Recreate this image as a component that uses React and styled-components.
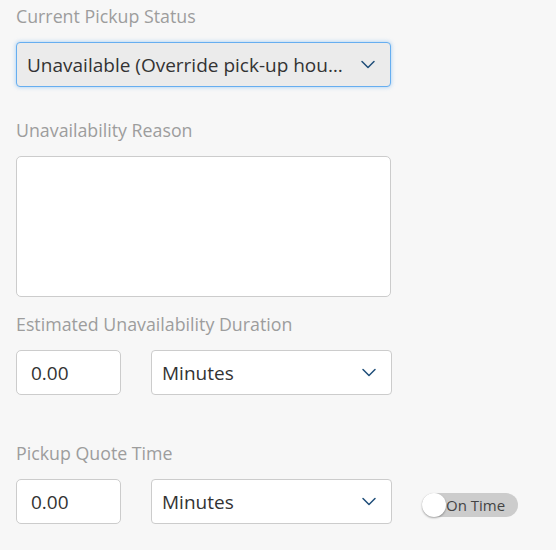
import React from 'react';
import styled, { createGlobalStyle } from 'styled-components';

const GlobalStyle = createGlobalStyle`
  html, body {
    margin: 0;
    padding: 0;
    background: #f7f7f7;
  }
  body {
    font-family: "Open Sans", "Noto Sans", sans-serif;
  }
`;

const Chevron = () => (
  <svg width="16" height="9" viewBox="0 0 16 9" fill="none">
    <path d="M2 1.5 L8 7.5 L14 1.5" stroke="#1f4e79" strokeWidth="1.5" strokeLinecap="round" strokeLinejoin="round" />
  </svg>
);

const App = () => {
  return (
    <>
      <GlobalStyle />
      <Form>
        <Label top={4}>Current Pickup Status</Label>
        <Select width={375} focused>
          <SelectText>Unavailable (Override pick-up hours)</SelectText>
          <Chevron />
        </Select>

        <Label top={31}>Unavailability Reason</Label>
        <TextArea />

        <Label top={15}>Estimated Unavailability Duration</Label>
        <Row>
          <NumberBox>0.00</NumberBox>
          <Select width={241}>
            <SelectText>Minutes</SelectText>
            <Chevron />
          </Select>
        </Row>

        <Label top={46}>Pickup Quote Time</Label>
        <Row>
          <NumberBox>0.00</NumberBox>
          <Select width={241}>
            <SelectText>Minutes</SelectText>
            <Chevron />
          </Select>
          <Toggle>
            <Knob />
            <ToggleText>On Time</ToggleText>
          </Toggle>
        </Row>
      </Form>
    </>
  );
};

export default App;

const Form = styled.div`
  display: flex;
  flex-direction: column;
  align-items: flex-start;
  padding: 0 16px 26px;
`;

const Label = styled.div`
  margin-top: ${(p) => p.top}px;
  margin-bottom: 14px;
  font-size: 17.8px;
  line-height: 24px;
  color: #9d9d9d;
`;

const Select = styled.div`
  box-sizing: border-box;
  width: ${(p) => p.width}px;
  height: 45px;
  display: flex;
  align-items: center;
  justify-content: space-between;
  padding: 0 14px 0 10px;
  border-radius: 4px;
  border: 1px solid ${(p) => (p.focused ? '#66aef0' : '#cccccc')};
  background: ${(p) => (p.focused ? '#ebebeb' : '#ffffff')};
  box-shadow: ${(p) => (p.focused ? '0 0 4px rgba(102, 174, 240, 0.6)' : 'none')};
  color: #333;
  font-size: 19px;
`;

const SelectText = styled.span`
  flex: 1;
  min-width: 0;
  overflow: hidden;
  white-space: nowrap;
  text-overflow: ellipsis;
  margin-right: 14px;
`;

const TextArea = styled.div`
  box-sizing: border-box;
  width: 375px;
  height: 141px;
  background: #fff;
  border: 1px solid #cccccc;
  border-radius: 5px;
`;

const Row = styled.div`
  display: flex;
  align-items: center;
  gap: 30px;
`;

const NumberBox = styled.div`
  box-sizing: border-box;
  width: 105px;
  height: 45px;
  display: flex;
  align-items: center;
  padding-left: 14px;
  background: #fff;
  border: 1px solid #cccccc;
  border-radius: 5px;
  color: #333;
  font-size: 19px;
`;

const Toggle = styled.div`
  display: flex;
  align-items: center;
  width: 96px;
  height: 24px;
  border-radius: 12px;
  background: #cccccc;
  margin-top: 6px;
`;

const Knob = styled.div`
  width: 24px;
  height: 24px;
  border-radius: 50%;
  background: #fff;
  box-shadow: 0 1px 2px rgba(0, 0, 0, 0.35);
`;

const ToggleText = styled.span`
  font-size: 15px;
  color: #444;
  margin-left: 0;
`;
